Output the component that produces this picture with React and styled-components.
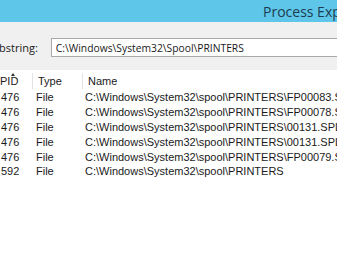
import React from "react";
import styled, { createGlobalStyle } from "styled-components";

const GlobalStyle = createGlobalStyle`
  html, body {
    margin: 0;
    padding: 0;
    background: #ffffff;
    overflow: hidden;
  }
`;

const Window = styled.div`
  width: 337px;
  height: 253px;
  overflow: hidden;
  background: #ffffff;
  display: flex;
  flex-direction: column;
`;

const TitleBar = styled.div`
  height: 22px;
  flex: none;
  background: #5dc6e9;
  padding-left: 263px;
  display: flex;
  align-items: center;
  white-space: nowrap;
  overflow: hidden;
  font-family: "Open Sans", "Noto Sans", sans-serif;
  font-size: 14px;
  color: #1d3c50;
`;

const FilterPanel = styled.div`
  height: 48px;
  flex: none;
  background: #f0f0f0;
  display: flex;
  align-items: center;
  gap: 13px;
  padding-top: 3px;
  box-sizing: border-box;
  font-family: "Open Sans", "Noto Sans", sans-serif;
  font-size: 11px;
  color: #1a1a1a;
  white-space: nowrap;
  overflow: hidden;
`;

const Label = styled.span`
  margin-left: -1px;
`;

const SearchBox = styled.div`
  flex: 1;
  height: 17px;
  margin-right: -10px;
  background: #ffffff;
  border: 1px solid #a9a9a9;
  padding-left: 4px;
  display: flex;
  align-items: center;
  font-size: 10.3px;
`;

const Table = styled.div`
  flex: 1;
  padding-top: 3px;
  font-family: "Liberation Sans", Arial, sans-serif;
  font-size: 11px;
  color: #1a1a1a;
  white-space: nowrap;
  overflow: hidden;
`;

const HeaderRow = styled.div`
  display: grid;
  grid-template-columns: 33px 50px 1fr;
  height: 16px;
  margin-bottom: 1px;
`;

const HeaderCell = styled.div`
  position: relative;
  display: flex;
  align-items: center;
  padding-left: ${(p) => p.$indent}px;
  border-right: ${(p) => (p.$last ? "none" : "1px solid #e3e3e3")};
`;

const SortArrow = styled.span`
  position: absolute;
  left: 11px;
  top: 0;
  width: 0;
  height: 0;
  border-left: 2.5px solid transparent;
  border-right: 2.5px solid transparent;
  border-bottom: 3px solid #333;
`;

const Row = styled.div`
  display: grid;
  grid-template-columns: 36px 49px 1fr;
  height: 14.8px;
  align-items: center;
`;

const Cell = styled.div`
  padding-left: ${(p) => p.$indent || 0}px;
  overflow: hidden;
`;

const rows = [
  ["476", "C:\\Windows\\System32\\spool\\PRINTERS\\FP00083.SPL"],
  ["476", "C:\\Windows\\System32\\spool\\PRINTERS\\FP00078.SPL"],
  ["476", "C:\\Windows\\System32\\spool\\PRINTERS\\00131.SPL"],
  ["476", "C:\\Windows\\System32\\spool\\PRINTERS\\00131.SPL"],
  ["476", "C:\\Windows\\System32\\spool\\PRINTERS\\FP00079.SPL"],
  ["592", "C:\\Windows\\System32\\spool\\PRINTERS"],
];

const App = () => {
  return (
    <>
      <GlobalStyle />
      <Window>
        <TitleBar>Process Explorer Search</TitleBar>
        <FilterPanel>
          <Label>bstring:</Label>
          <SearchBox>C:\Windows\System32\Spool\PRINTERS</SearchBox>
        </FilterPanel>
        <Table>
          <HeaderRow>
            <HeaderCell $indent={0}>
              PID
              <SortArrow />
            </HeaderCell>
            <HeaderCell $indent={5}>Type</HeaderCell>
            <HeaderCell $indent={5} $last>
              Name
            </HeaderCell>
          </HeaderRow>
          {rows.map(([pid, name], i) => (
            <Row key={i}>
              <Cell $indent={1}>{pid}</Cell>
              <Cell>File</Cell>
              <Cell>{name}</Cell>
            </Row>
          ))}
        </Table>
      </Window>
    </>
  );
};

export default App;
